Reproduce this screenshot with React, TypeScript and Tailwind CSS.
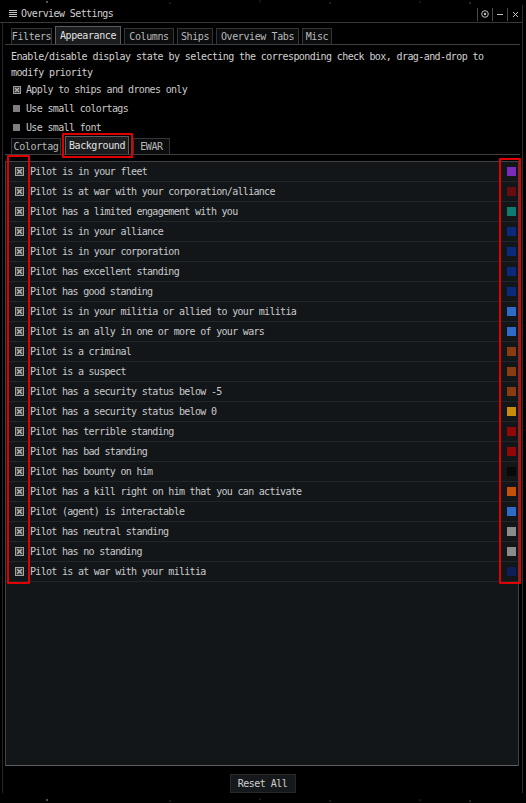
import React from 'react';

const FONT = "font-['DejaVu_Sans_Mono','Liberation_Mono',monospace]";

const ROWS: [string, string][] = [
  ['Pilot is in your fleet', '#7a2bb9'],
  ['Pilot is at war with your corporation/alliance', '#670d11'],
  ['Pilot has a limited engagement with you', '#0e7b72'],
  ['Pilot is in your alliance', '#0c2a7c'],
  ['Pilot is in your corporation', '#0c2a7c'],
  ['Pilot has excellent standing', '#0c2a7c'],
  ['Pilot has good standing', '#0c2a7c'],
  ['Pilot is in your militia or allied to your militia', '#2e6bc9'],
  ['Pilot is an ally in one or more of your wars', '#2e6bc9'],
  ['Pilot is a criminal', '#8a3c11'],
  ['Pilot is a suspect', '#8a3c11'],
  ['Pilot has a security status below -5', '#8a3c11'],
  ['Pilot has a security status below 0', '#c98b0b'],
  ['Pilot has terrible standing', '#940709'],
  ['Pilot has bad standing', '#940709'],
  ['Pilot has bounty on him', '#080808'],
  ['Pilot has a kill right on him that you can activate', '#c6500a'],
  ['Pilot (agent) is interactable', '#2e6bc9'],
  ['Pilot has neutral standing', '#8b8b8b'],
  ['Pilot has no standing', '#8b8b8b'],
  ['Pilot is at war with your militia', '#0c1f5a'],
];

const TABS: [string, string, boolean][] = [
  ['Filters', 'w-[41px]', false],
  ['Appearance', 'w-[66px]', true],
  ['Columns', 'w-[50px]', false],
  ['Ships', 'w-[36px]', false],
  ['Overview Tabs', 'w-[83px]', false],
  ['Misc', 'w-[30px]', false],
];

const SUBTABS: [string, string, boolean][] = [
  ['Colortag', 'w-[50px]', false],
  ['Background', 'w-[64px]', true],
  ['EWAR', 'w-[37px]', false],
];

function CheckedBox() {
  return (
    <svg width="9" height="9" viewBox="0 0 9 9" className="shrink-0">
      <rect x="0.5" y="0.5" width="8" height="8" fill="#3b3b3b" stroke="#a3a3a3" />
      <path d="M2.2 2.2L6.8 6.8M6.8 2.2L2.2 6.8" stroke="#b4b4b4" strokeWidth="1.4" />
    </svg>
  );
}

function Tab({ label, width, active }: { label: string; width: string; active: boolean }) {
  return (
    <div
      className={`${width} flex items-center justify-center border border-b-0 text-[10px] tracking-[-0.4px] ${
        active
          ? 'h-[18px] bg-[#1a1c1e] border-[#5a5c5e] text-[#e2e2e2]'
          : 'h-[16px] bg-[#0b0c0d] border-[#333536] text-[#b8b8b8]'
      }`}
    >
      {label}
    </div>
  );
}

function Stars({ h }: { h: number }) {
  return (
    <svg width="526" height={h} className="block">
      <defs>
        <radialGradient id={`g${h}`} cx="0.5" cy="1" r="0.5">
          <stop offset="0" stopColor="#3c9a2c" stopOpacity="0.9" />
          <stop offset="1" stopColor="#0a2a06" stopOpacity="0" />
        </radialGradient>
      </defs>
      {h > 6 && <ellipse cx="82" cy={h + 2} rx="16" ry="6" fill={`url(#g${h})`} />}
      <circle cx="47" cy={h - 3} r="0.8" fill="#bbb" />
      <circle cx="170" cy={h - 2} r="0.5" fill="#888" />
      <circle cx="260" cy={h - 4} r="0.5" fill="#777" />
      <circle cx="330" cy={h - 2} r="0.5" fill="#999" />
      <circle cx="420" cy={h - 3} r="0.5" fill="#777" />
      <circle cx="470" cy={h - 2} r="0.6" fill="#aaa" />
    </svg>
  );
}

export default function App() {
  return (
    <div className={`relative w-[526px] h-[803px] bg-black overflow-hidden ${FONT} text-[#c9c9c9]`}>
      <Stars h={5} />

      {/* window */}
      <div className="w-[523px] h-[788px] border-r border-[#2c2c2c] flex flex-col">
        {/* header */}
        <div className="h-[18px] border-b border-[#3a3a3a] flex items-center pl-[9px]">
          <svg width="8" height="8" viewBox="0 0 8 8" className="mr-[4px]">
            <path d="M0 0.5H8M0 2.5H8M0 4.5H8M0 6.5H8" stroke="#c4c4c4" strokeWidth="1" />
          </svg>
          <span className="text-[10px] tracking-[-0.6px] text-[#cfcfcf]">Overview Settings</span>
          <div className="ml-auto flex items-center h-[13px] mt-[1px]">
            <div className="w-px h-full bg-[#4a4a4a]" />
            <div className="w-[14px] flex justify-center">
              <svg width="8" height="8" viewBox="0 0 8 8">
                <circle cx="4" cy="4" r="3.3" fill="none" stroke="#bdbdbd" strokeWidth="1" />
                <circle cx="4" cy="4" r="1.2" fill="#bdbdbd" />
              </svg>
            </div>
            <div className="w-px h-full bg-[#4a4a4a]" />
            <div className="w-[14px] flex justify-center">
              <div className="w-[6px] h-px bg-[#c4c4c4]" />
            </div>
            <div className="w-px h-full bg-[#4a4a4a]" />
            <div className="w-[14px] flex justify-center">
              <svg width="7" height="7" viewBox="0 0 7 7">
                <path d="M1 1L6 6M6 1L1 6" stroke="#c4c4c4" strokeWidth="1" />
              </svg>
            </div>
          </div>
        </div>

        {/* body */}
        <div className="flex-1 ml-[2px] border-l border-[#262626] flex flex-col">
          {/* top tabs */}
          <div className="mx-[2px] mt-[2px] h-[20px] border-b border-[#3c3e40] flex items-end gap-[3px] pl-[6px]">
            {TABS.map(([l, w, a]) => (
              <Tab key={l} label={l} width={w} active={a} />
            ))}
          </div>

          <div className="mt-[4px] pl-[8px] text-[10px] leading-[16px] tracking-[-0.59px] text-[#d2d2d2]">
            Enable/disable display state by selecting the corresponding check box, drag-and-drop to
            <br />
            modify priority
          </div>

          <div className="mt-[-1px] flex flex-col text-[10px] tracking-[-0.65px]">
            <div className="h-[19px] flex items-center pl-[10px] gap-[5px]">
              <svg width="8" height="8" viewBox="0 0 8 8">
                <rect x="0.5" y="0.5" width="7" height="7" fill="#3b3b3b" stroke="#9a9a9a" />
                <path d="M2 2L6 6M6 2L2 6" stroke="#b0b0b0" strokeWidth="1.2" />
              </svg>
              <span>Apply to ships and drones only</span>
            </div>
            <div className="h-[19px] flex items-center pl-[10px] gap-[6px]">
              <div className="w-[7px] h-[7px] bg-[#7e7e7e]" />
              <span>Use small colortags</span>
            </div>
            <div className="h-[19px] flex items-center pl-[10px] gap-[6px]">
              <div className="w-[7px] h-[7px] bg-[#7e7e7e]" />
              <span>Use small font</span>
            </div>
          </div>

          {/* sub tabs */}
          <div className="mx-[2px] mt-[-1px] h-[19px] border-b border-[#3c3e40] flex items-end gap-[4px] pl-[6px]">
            {SUBTABS.map(([l, w, a]) => (
              <Tab key={l} label={l} width={w} active={a} />
            ))}
          </div>

          {/* list */}
          <div className="ml-[2px] mt-[6px] w-[514px] h-[605px] border border-[#3e4244] border-b-[#5c5f61] bg-[#121619]">
            {ROWS.map(([label, color]) => (
              <div key={label} className="h-[20px] border-b border-[#20262a] flex items-center pl-[9px] pr-[2px]">
                <CheckedBox />
                <span className="ml-[6px] text-[10px] tracking-[-0.7px] text-[#cacaca] whitespace-nowrap">{label}</span>
                <div className="ml-auto w-[9px] h-[9px] mt-[-1px]" style={{ backgroundColor: color }} />
              </div>
            ))}
          </div>

          <div className="flex justify-center mt-[8px]">
            <div className="w-[66px] h-[19px] bg-[#16191b] border border-[#26292b] flex items-center justify-center text-[10px] tracking-[-0.5px] text-[#cfcfcf]">
              Reset All
            </div>
          </div>
        </div>
      </div>

      <Stars h={10} />

      {/* red annotation outlines */}
      <div className="absolute left-[62px] top-[133px] w-[71px] h-[25px] border-2 border-[#e00000] rounded-[1px]" />
      <div className="absolute left-[7px] top-[155px] w-[23px] h-[429px] border-2 border-[#e00000] rounded-[1px]" />
      <div className="absolute left-[499px] top-[158px] w-[22px] h-[426px] border-2 border-[#e00000] rounded-[1px]" />
    </div>
  );
}
